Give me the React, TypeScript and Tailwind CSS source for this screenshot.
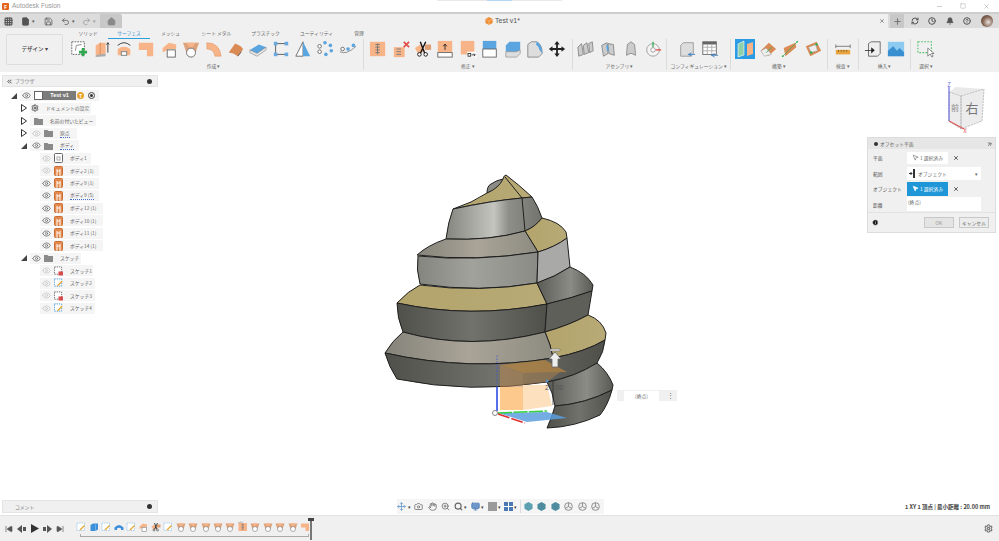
import { ReactNode } from "react"
import {
  Bell,
  Camera,
  ChevronsLeft,
  ChevronsRight,
  CircleHelp,
  Clock,
  Eye,
  File,
  Grid3x3,
  Hand,
  Home,
  Info,
  Minus,
  Monitor,
  MousePointer2,
  Move,
  Plus,
  Redo2,
  RefreshCw,
  Save,
  Search,
  Settings,
  SkipBack,
  SkipForward,
  Square,
  Undo2,
  X,
  ZoomIn,
} from "lucide-react"

const O = "#f7b488"
const D = "#d98a55"
const B = "#5aa5e0"

function Svg({ children, size = 20 }: { children: ReactNode; size?: number }) {
  return (
    <svg width={size} height={size} viewBox="0 0 20 20" className="shrink-0">
      {children}
    </svg>
  )
}

const icons: Record<string, ReactNode> = {
  sketch: (
    <>
      <rect x="2" y="2" width="14" height="14" fill="#fff" stroke="#666" strokeDasharray="2 1" />
      <path d="M6 12 L7 6 L13 5" fill="none" stroke="#888" />
      <path d="M14 12h3v3h3v3h-3v3h-3v-3h-3v-3h3z" fill="#2fa84f" transform="translate(-1 -3)" />
    </>
  ),
  tlsketch: (
    <>
      <rect x="2" y="2" width="15" height="15" fill="#fff" stroke="#4b9cdc" strokeDasharray="2 1.500" />
      <path d="M8 16 L17 7" stroke="#e8a72e" strokeWidth="2.500" />
    </>
  ),
  tlextrude: (
    <>
      <path d="M3 6 L8 3 H18 V15 L13 18 H3Z" fill="#3c8fd8" />
      <path d="M13 5V18" stroke="#9ccbf0" />
    </>
  ),
  tlrevolve: <path d="M1 11 Q10 1 19 11 V16 H14 V13 Q10 10 6 13 V16 H1Z" fill="#3c8fd8" />,
  extrude: (
    <>
      <path d="M3 6 L8 3 L14 3 L14 15 L8 17 L3 17Z" fill={O} />
      <path d="M8 3v14" stroke={D} />
      <path d="M3 17 L14 15 L14 18 L3 19Z" fill="#aaa" />
      <path d="M16.500 14V3M15 5l1.500-2 1.500 2" stroke="#333" fill="none" />
    </>
  ),
  revolve: (
    <>
      <path d="M3 10 Q10 5 17 10 L17 17 L13 17 L13 13 Q10 11 7 13 L7 17 L3 17Z" fill={O} />
      <path d="M3 6 Q10 0 17 6" fill="none" stroke="#333" />
      <rect x="7" y="13" width="6" height="4" fill="#fff" stroke="#777" />
    </>
  ),
  lshape: <path d="M2 3 H18 V18 H11 V11 H2Z" fill={O} />,
  loft: (
    <>
      <path d="M3 9 L10 3 L18 5 L18 10 L10 10 L3 14Z" fill={O} />
      <rect x="8" y="11" width="9" height="8" fill="#fff" stroke="#666" />
    </>
  ),
  patch: (
    <>
      <path d="M1 3 H19 L15 14 H5Z" fill={D} opacity="0.75" />
      <path d="M5 3 L10 11 L15 3Z" fill={O} />
      <circle cx="10" cy="14" r="5" fill="#fff" stroke="#666" />
    </>
  ),
  arc: <path d="M2 3 Q16 3 18 18 H11 Q10 10 2 10Z" fill={O} stroke={D} strokeWidth="0.500" />,
  thicken: (
    <>
      <path d="M2 14 L9 4 Q15 6 18 10 L12 18 Q7 14 2 14Z" fill={D} />
      <path d="M16 13 L12 18" stroke="#555" />
    </>
  ),
  offset: (
    <>
      <path d="M1 11 L11 5 L19 8 L9 15Z" fill={B} />
      <path d="M1 11 L9 15 L19 8 V11 L9 18 L1 14Z" fill="#e8e8e8" stroke="#777" strokeWidth="0.600" />
    </>
  ),
  boundary: (
    <>
      <path d="M4 4H16M4 16H16M4 4V16" stroke="#555" fill="none" />
      <rect x="2" y="2" width="4" height="4" fill="#6aa9e0" />
      <rect x="14" y="2" width="4" height="4" fill="#6aa9e0" />
      <rect x="2" y="14" width="4" height="4" fill="#6aa9e0" />
      <rect x="14" y="14" width="4" height="4" fill="#6aa9e0" />
    </>
  ),
  prism: (
    <>
      <path d="M10 2 L2 18 H10Z" fill="#fff" stroke="#666" />
      <path d="M10 2 L18 18 H10Z" fill={B} />
    </>
  ),
  dots: (
    <>
      <circle cx="10" cy="3" r="2" fill={B} />
      <circle cx="16" cy="6" r="2" fill={B} />
      <circle cx="17" cy="12" r="2" fill={B} />
      <circle cx="11" cy="16" r="2" fill={B} />
      <circle cx="4" cy="7" r="2" fill="#fff" stroke="#666" />
      <circle cx="4" cy="13" r="2" fill="#fff" stroke="#666" />
    </>
  ),
  spline: (
    <>
      <path d="M1 13 Q8 17 19 7" fill="none" stroke="#888" />
      <circle cx="4" cy="10" r="2" fill="#fff" stroke="#666" />
      <circle cx="10" cy="10" r="2" fill={B} />
      <circle cx="16" cy="6" r="2" fill={B} />
    </>
  ),
  stitch: (
    <>
      <rect x="1" y="2" width="17" height="16" fill={O} />
      <path d="M7 5h5M7 8h5M7 11h5M7 14h5M9.500 4v12" stroke="#777" fill="none" />
    </>
  ),
  unstitch: (
    <>
      <rect x="2" y="8" width="12" height="11" fill={O} />
      <path d="M5 10h5M5 13h5M5 16h5" stroke="#777" />
      <path d="M13 2l6 6M19 2l-6 6" stroke="#e0524a" strokeWidth="2" />
    </>
  ),
  trim: (
    <>
      <rect x="12" y="5" width="7" height="6" fill={D} opacity="0.8" />
      <path d="M1 9 L7 5 L12 12 L5 16Z" fill={O} />
      <path d="M7 2 L12 15M13 2 L7 15" stroke="#111" strokeWidth="1.500" />
      <circle cx="6" cy="16" r="2" fill="#fff" stroke="#111" />
      <circle cx="13" cy="16" r="2" fill="#fff" stroke="#111" />
    </>
  ),
  extend: (
    <>
      <rect x="2" y="1" width="16" height="13" fill={O} />
      <rect x="2" y="14" width="16" height="5" fill="#fff" stroke="#666" />
      <path d="M10 11V5M8 7l2-2.500 2 2.500" stroke="#222" fill="none" />
    </>
  ),
  press: (
    <>
      <rect x="2" y="1" width="15" height="15" fill={O} />
      <rect x="9" y="13" width="10" height="6" fill="#fff" />
      <rect x="10" y="15" width="3" height="3" fill="none" stroke="#333" />
      <path d="M14 16.500h4M16.500 15l1.500 1.500-1.500 1.500" stroke="#333" fill="none" />
    </>
  ),
  replace: (
    <>
      <rect x="2" y="1" width="15" height="9" fill={B} />
      <rect x="2" y="10" width="15" height="9" fill="#fff" stroke="#666" />
    </>
  ),
  split: (
    <>
      <path d="M2 6 L6 2 H18 V11 L14 13 H2Z" fill={B} />
      <path d="M2 13 H14 L18 11 V15 L14 19 H2Z" fill="#ddd" stroke="#777" strokeWidth="0.600" />
    </>
  ),
  round: (
    <>
      <path d="M2 5 L6 2 H12 Q18 5 18 15 L14 19 H2Z" fill="#ddd" stroke="#888" />
      <path d="M12 2 Q18 5 18 15 L15 11 Q14 7 11 5Z" fill={B} />
    </>
  ),
  move: <path d="M10 1 L13 5 H11 V9 H15 V7 L19 10 L15 13 V11 H11 V15 H13 L10 19 L7 15 H9 V11 H5 V13 L1 10 L5 7 V9 H9 V5 H7Z" fill="#222" />,
  joint1: <path d="M1 8 L5 4 L7 16 L2 18ZM7 6 L11 3 L13 14 L8 16ZM13 4 L17 2 L18 12 L14 14Z" fill="#ccc" stroke="#888" />,
  joint2: (
    <>
      <path d="M3 6 L9 3 L10 15 L5 18ZM10 4 L16 5 L17 17 L11 15Z" fill="#ccc" stroke="#888" />
      <path d="M9 6 L10 12" stroke={B} strokeWidth="2" />
    </>
  ),
  joint3: <path d="M6 5 L10 2 L14 5 L15 17 L11 15 L9 15 L5 17Z" fill="#ccc" stroke="#888" />,
  motion: (
    <>
      <circle cx="10" cy="11" r="7" fill="#f4f4f4" stroke="#999" />
      <circle cx="10" cy="11" r="2.500" fill="#fff" stroke="#999" />
      <path d="M10 2V8" stroke="#3cae5a" strokeWidth="1.500" />
      <path d="M13 11H19" stroke="#e0524a" strokeWidth="1.500" />
    </>
  ),
  config1: (
    <>
      <path d="M3 6 L6 3 H17 V15 L14 18 H3Z" fill="#ddd" stroke="#999" />
      <path d="M11 16h8M15 14l-3 2 3 2" stroke="#3c80c4" fill="none" />
    </>
  ),
  config2: (
    <>
      <rect x="2" y="2" width="15" height="14" fill="#fff" stroke="#666" />
      <rect x="2" y="2" width="15" height="3" fill="#666" />
      <path d="M2 8h15M2 12h15M7 5v11M12 5v11" stroke="#aaa" />
      <path d="M11 17h8M15 15l-3 2 3 2" stroke="#3c80c4" fill="none" />
    </>
  ),
  plane: (
    <>
      <rect x="0" y="0" width="20" height="20" fill="#2b9be3" />
      <path d="M3 5 L9 2 V16 L3 18Z" fill="#8ed1a8" stroke="#fff" strokeWidth="0.600" />
      <path d="M12 5 L18 3 V15 L12 17Z" fill={O} />
    </>
  ),
  diamond: (
    <>
      <path d="M2 12 L11 3 L19 10 L10 18Z" fill={D} />
      <path d="M2 12 L8 9 L14 16 L6 18Z" fill="#eee" stroke="#999" strokeWidth="0.600" />
      <path d="M8 14 L14 8" stroke="#3cae5a" />
    </>
  ),
  axis: (
    <>
      <path d="M3 9 L16 3 L17 8 L5 18Z" fill={D} />
      <path d="M1 19 L19 1" stroke="#3cae5a" strokeWidth="0.800" />
      <circle cx="2" cy="18" r="1" fill="#3cae5a" />
      <circle cx="18" cy="2" r="1" fill="#3cae5a" />
    </>
  ),
  point: (
    <>
      <path d="M2 7 L14 2 L19 12 L7 18Z" fill={D} />
      <path d="M5 8 L13 5 L15 12 L8 14Z" fill="#eee" stroke="#999" strokeWidth="0.600" />
      <circle cx="14" cy="5" r="1.500" fill="#3cae5a" />
      <circle cx="8" cy="14" r="1.500" fill="#3cae5a" />
    </>
  ),
  measure: (
    <>
      <path d="M2 5V9M18 5V9M2 7H18" stroke="#777" fill="none" />
      <rect x="2" y="11" width="16" height="5" fill="#e8a33d" />
      <path d="M5 11v2M8 11v2M11 11v2M14 11v2" stroke="#7a5a20" />
    </>
  ),
  insert: (
    <>
      <path d="M5 4 L8 2 H18 V15 L15 18 H5Z" fill="#eee" stroke="#666" />
      <path d="M1 11h7V8l4 3.500-4 3.500v-3H1z" fill="#222" />
    </>
  ),
  image: (
    <>
      <rect x="1" y="2" width="18" height="16" fill="#8ccbef" />
      <path d="M1 18 V12 L7 7 L11 12 L14 9 L19 14 V18Z" fill="#3a8fd0" />
    </>
  ),
  select: (
    <>
      <rect x="1" y="2" width="15" height="12" fill="none" stroke="#59c06f" strokeWidth="1.200" strokeDasharray="2 1.500" />
      <path d="M12 9 L12 18 L14.500 15.500 L16.500 19 L18 18 L16 15 L19 15Z" fill="#fff" stroke="#555" strokeWidth="0.700" />
    </>
  ),
}

type GroupProps = { label: string; items: string[]; className: string; last?: boolean }

function ToolGroup({ label, items, className, last }: GroupProps) {
  return (
    <div className={`flex flex-col items-center shrink-0 ${last ? "" : "border-r border-[#dcdcdc]"} ${className}`}>
      <div className="flex h-[20px] items-center">
        {items.map((n, i) => (
          <div key={i} className="flex w-[22.400px] justify-center">
            <Svg size={n === "plane" ? 20 : 18}>{icons[n]}</Svg>
          </div>
        ))}
      </div>
      <div className="mt-[1.500px] h-[9px] whitespace-nowrap text-[4.800px] leading-[9px] text-[#666]">{label} ▾</div>
    </div>
  )
}

const tabs: [string, string][] = [
  ["ソリッド", "w-[40px]"],
  ["サーフェス", "w-[42px]"],
  ["メッシュ", "w-[41px]"],
  ["シート メタル", "w-[51px]"],
  ["プラスチック", "w-[47px]"],
  ["ユーティリティ", "w-[55px]"],
  ["管理", "w-[30px]"],
]

function Toolbar() {
  return (
    <div className="flex h-[44px] shrink-0 bg-[#f0f0f0] pl-[6px]">
      <div className="mt-[6px] flex h-[31px] w-[57px] items-center justify-center rounded-[2px] border border-[#dedede] text-[5.500px] font-medium text-[#444]">
        デザイン ▾
      </div>
      <div className="ml-[5px] flex flex-col">
        <div className="flex h-[11px] items-end pt-[1px]">
          {tabs.map(([t, w], i) => (
            <div
              key={t}
              className={`h-[11px] ${w} text-center text-[4.800px] leading-[10px] ${
                i === 1 ? "border-b border-[#2ba0dc] text-[#2b8fcf]" : "text-[#666]"
              }`}
            >
              {t}
            </div>
          ))}
        </div>
        <div className="flex">
          <ToolGroup
            label="作成"
            className="pr-[4px]"
            items={["sketch", "extrude", "revolve", "lshape", "loft", "patch", "arc", "thicken", "offset", "boundary", "prism", "dots", "spline"]}
          />
          <ToolGroup
            label="修正"
            className="px-[3px]"
            items={["stitch", "unstitch", "trim", "extend", "press", "replace", "split", "round", "move"]}
          />
          <ToolGroup label="アセンブリ" className="px-[2px]" items={["joint1", "joint2", "joint3", "motion"]} />
          <ToolGroup label="コンフィギュレーション" className="w-[64px]" items={["config1", "config2"]} />
          <ToolGroup label="構築" className="px-[3px]" items={["plane", "diamond", "axis", "point"]} />
          <ToolGroup label="検査" className="px-[4px]" items={["measure"]} />
          <ToolGroup label="挿入" className="px-[3px]" items={["insert", "image"]} />
          <ToolGroup label="選択" className="pl-[4px]" items={["select"]} last />
        </div>
      </div>
    </div>
  )
}

type TreeRowProps = {
  label: string
  arrow?: "open" | "closed"
  eye?: boolean
  faint?: boolean
  icon: ReactNode
  indent: string
  chip: string
  dotted?: boolean
}

function Tri({ arrow }: { arrow?: "open" | "closed" }) {
  return (
    <div className="mr-[2px] flex w-[9px] shrink-0 justify-center">
      {arrow === "open" && <div className="h-0 w-0 border-b-[6px] border-l-[6px] border-b-[#444] border-l-transparent" />}
      {arrow === "closed" && (
        <svg width="6" height="8" viewBox="0 0 6 8">
          <path d="M.5.5 5.500 4 .5 7.500Z" fill="#fff" stroke="#333" />
        </svg>
      )}
    </div>
  )
}

const Folder = () => (
  <svg width="9" height="8" viewBox="0 0 9 8" className="ml-[2px] shrink-0">
    <path d="M0 1h3.500l1 1H9v6H0z" fill="#8a8a8a" />
  </svg>
)

const BodyIcon = () => (
  <svg width="9" height="10" viewBox="0 0 9 10" className="ml-[2px] shrink-0">
    <rect x=".5" y=".5" width="8" height="9" rx="1" fill="#e58a4e" stroke="#c86f35" />
    <path d="M3 3v7M6 3v7M3 5h3" stroke="#fff" strokeWidth="1" />
  </svg>
)

const EmptyBody = () => (
  <svg width="9" height="10" viewBox="0 0 9 10" className="ml-[2px] shrink-0">
    <rect x=".5" y=".5" width="8" height="9" rx="1" fill="#fff" stroke="#666" />
    <rect x="3" y="4" width="3" height="3" fill="none" stroke="#aaa" />
  </svg>
)

const SketchIcon = ({ lock }: { lock?: boolean }) => (
  <svg width="9" height="10" viewBox="0 0 10 10" className="ml-[2px] shrink-0">
    <rect x=".5" y=".5" width="8" height="8" fill="#fff" stroke={lock ? "#666" : "#4b9cdc"} strokeDasharray="1.500 1" />
    {lock ? <rect x="5" y="5.500" width="5" height="4.500" fill="#d94c4c" /> : <path d="M4 8 9 3" stroke="#e6a72e" strokeWidth="1.400" />}
  </svg>
)

function EyeIcon({ faint }: { faint?: boolean }) {
  return <Eye className={`h-[9px] w-[9px] shrink-0 ${faint ? "text-[#c4c4c4]" : "text-[#666]"}`} strokeWidth={2} />
}

function TreeRow({ label, arrow, eye, faint, icon, indent, chip, dotted }: TreeRowProps) {
  return (
    <div className={`flex h-[12.500px] items-center ${indent}`}>
      <Tri arrow={arrow} />
      <div className={`flex h-[11px] items-center bg-[#f5f5f5] ${chip}`}>
        {eye && (
          <div className="flex w-[12px] shrink-0 justify-center">
            <EyeIcon faint={faint} />
          </div>
        )}
        {icon}
        <span
          className={`ml-[7px] whitespace-nowrap text-[4.800px] leading-[8px] text-[#666] ${
            dotted ? "border-b border-dotted border-[#3c6fc4]" : ""
          }`}
        >
          {label}
        </span>
      </div>
    </div>
  )
}

function Browser() {
  const indent1 = "pl-[17px]"
  const indent2 = "pl-[27px]"
  const bodyChip = "w-[59px]"
  return (
    <div className="absolute left-[2px] top-[3px] w-[156px]">
      <div className="flex h-[12px] items-center border border-[#e4e4e4] bg-[#f0f0f0] pl-[3px] pr-[5px] text-[4.800px] text-[#777]">
        <ChevronsLeft className="h-[7px] w-[7px] text-[#444]" strokeWidth={3} />
        <span className="ml-[2px] flex-1">ブラウザ</span>
        <div className="h-[5px] w-[5px] rounded-full bg-[#333]" />
      </div>
      <div className="pt-[2.500px]">
        <div className="flex h-[12.500px] items-center pl-[7px]">
          <Tri arrow="open" />
          <div className="flex h-[11px] w-[79px] items-center bg-[#f5f5f5]">
            <div className="flex w-[12px] justify-center">
              <EyeIcon />
            </div>
            <div className="ml-[2px] h-[9px] w-[9px] border border-[#666] bg-white" />
            <div className="h-[9px] w-[33px] bg-[#7b7b7b] text-center font-['Liberation_Sans',sans-serif] text-[5.500px] font-bold leading-[9px] text-white">Test v1</div>
            <div className="ml-[1px] flex h-[7px] w-[7px] items-center justify-center rounded-full bg-[#e8a22c] text-[5px] font-bold text-white">T</div>
            <div className="ml-[4px] flex h-[7px] w-[7px] items-center justify-center rounded-full border border-[#444]">
              <div className="h-[3px] w-[3px] rounded-full bg-[#333]" />
            </div>
          </div>
        </div>
        <TreeRow label="ドキュメントの設定" arrow="closed" indent={indent1} chip="w-[61px] pl-[1px]" icon={<Settings className="h-[8px] w-[8px] text-[#555]" strokeWidth={3} />} />
        <TreeRow label="名前の付いたビュー" arrow="closed" indent={indent1} chip="w-[66px] pl-[2px]" icon={<Folder />} />
        <TreeRow label="原点" arrow="closed" eye faint indent={indent1} chip="w-[47px]" icon={<Folder />} dotted />
        <TreeRow label="ボディ" arrow="open" eye indent={indent1} chip="w-[49px]" icon={<Folder />} dotted />
        <TreeRow label="ボディ1" eye faint indent={indent2} chip="w-[51px]" icon={<EmptyBody />} />
        <TreeRow label="ボディ2 (1)" eye faint indent={indent2} chip={bodyChip} icon={<BodyIcon />} />
        <TreeRow label="ボディ9 (1)" eye indent={indent2} chip={bodyChip} icon={<BodyIcon />} />
        <TreeRow label="ボディ9 (5)" eye indent={indent2} chip={bodyChip} icon={<BodyIcon />} dotted />
        <TreeRow label="ボディ12 (1)" eye indent={indent2} chip="w-[63px]" icon={<BodyIcon />} />
        <TreeRow label="ボディ10 (1)" eye indent={indent2} chip="w-[63px]" icon={<BodyIcon />} />
        <TreeRow label="ボディ11 (1)" eye indent={indent2} chip="w-[63px]" icon={<BodyIcon />} />
        <TreeRow label="ボディ14 (1)" eye indent={indent2} chip="w-[63px]" icon={<BodyIcon />} />
        <TreeRow label="スケッチ" arrow="open" eye indent={indent1} chip="w-[51px]" icon={<Folder />} />
        <TreeRow label="スケッチ1" eye faint indent={indent2} chip="w-[53px]" icon={<SketchIcon lock />} />
        <TreeRow label="スケッチ2" eye faint indent={indent2} chip="w-[55px]" icon={<SketchIcon />} />
        <TreeRow label="スケッチ3" eye faint indent={indent2} chip="w-[55px]" icon={<SketchIcon lock />} />
        <TreeRow label="スケッチ4" eye faint indent={indent2} chip="w-[55px]" icon={<SketchIcon />} />
      </div>
    </div>
  )
}

function DialogRow({ label, children }: { label: string; children: ReactNode }) {
  return (
    <div className="flex h-[15.500px] items-center">
      <span className="w-[39px] whitespace-nowrap pl-[5px] text-[4.800px] text-[#555]">{label}</span>
      {children}
    </div>
  )
}

function OffsetDialog() {
  return (
    <div className="absolute left-[867px] top-[65px] w-[129px] border border-[#dcdcdc] bg-[#f0f0f0]">
      <div className="flex h-[11px] items-center bg-[#e6e6e6] pl-[6px] pr-[2px] text-[4.800px] text-[#666]">
        <div className="mr-[2px] h-[4px] w-[4px] rounded-full bg-[#333]" />
        <span className="flex-1">オフセット平面</span>
        <ChevronsRight className="h-[6px] w-[6px] text-[#333]" strokeWidth={3} />
      </div>
      <div className="pt-[1px]">
        <DialogRow label="平面">
          <div className="flex h-[12px] w-[41px] items-center justify-center whitespace-nowrap bg-white text-[4.800px] text-[#666]">
            <MousePointer2 className="mr-[1px] h-[7px] w-[7px]" />1 選択済み
          </div>
          <X className="ml-[5px] h-[6px] w-[6px] text-[#333]" strokeWidth={3} />
        </DialogRow>
        <DialogRow label="範囲">
          <div className="flex h-[13px] w-[74px] items-center bg-white pl-[2px] pr-[3px] text-[4.800px] text-[#666]">
            <svg width="8" height="9" viewBox="0 0 8 9" className="mr-[1px]">
              <path d="M0 4.500h3M1.500 3 3 4.500 1.500 6" stroke="#333" fill="none" />
              <path d="M5 0v9" stroke="#333" strokeWidth="2" />
            </svg>
            <span className="flex-1">オブジェクト</span>▾
          </div>
        </DialogRow>
        <DialogRow label="オブジェクト">
          <div className="flex h-[14px] w-[41px] items-center justify-center whitespace-nowrap bg-[#1f96d8] text-[4.800px] text-white">
            <MousePointer2 className="mr-[1px] h-[7px] w-[7px]" fill="#fff" />1 選択済み
          </div>
          <X className="ml-[5px] h-[6px] w-[6px] text-[#333]" strokeWidth={3} />
        </DialogRow>
        <DialogRow label="距離">
          <div className="h-[14px] w-[74px] bg-white pl-[1px] text-[4.800px] leading-[10px] text-[#666]">(終点)</div>
        </DialogRow>
      </div>
      <div className="flex h-[20px] items-center border-t border-[#e2e2e2] pl-[4px] pr-[6px]">
        <Info className="h-[7px] w-[7px] text-white" fill="#111" />
        <div className="ml-[45px] flex h-[11px] w-[31px] items-center justify-center border border-[#c8c8c8] bg-[#e4e4e4] text-[5px] text-[#999]">OK</div>
        <div className="ml-[5px] flex h-[11px] w-[31px] items-center justify-center whitespace-nowrap border border-[#c8c8c8] bg-[#ececec] text-[4.800px] text-[#666]">キャンセル</div>
      </div>
    </div>
  )
}

function ViewCube() {
  return (
    <svg className="absolute left-[936px] top-[9px]" width="56" height="56" viewBox="0 0 56 56">
      <path d="M13 11 L20 6 L48 8 L46 40 L25 48 L13 40Z" fill="#e9e9e9" />
      <path d="M13 11 L25 15 L25 48 L13 40ZM25 15 L48 8 L46 40 L25 48Z" fill="#ececec" stroke="#aaa" strokeDasharray="2 1" strokeWidth="0.700" />
      <path d="M13 40V6" stroke="#6d6de0" strokeWidth="1.200" />
      <path d="M13 40 L28 48" stroke="#e05a5a" strokeWidth="1.200" />
      <text x="13" y="6" textAnchor="middle" fontSize="6" fill="#6d6de0">Z</text>
      <text x="29" y="52" textAnchor="middle" fontSize="6" fill="#e05a5a">X</text>
      <text x="36" y="32" textAnchor="middle" fontSize="13" fill="#777" fontFamily="Noto Sans CJK JP">右</text>
      <text x="19" y="30" textAnchor="middle" fontSize="8" fill="#888" fontFamily="Noto Sans CJK JP">前</text>
    </svg>
  )
}

function Model() {
  return (
    <svg className="absolute left-0 top-0" width="999" height="443" viewBox="0 72 999 443" fill="none">
      <defs>
        <linearGradient id="tan" x1="0" x2="1" y1="0" y2="0">
          <stop offset="0" stopColor="#b3a46c" />
          <stop offset="1" stopColor="#b8aa76" />
        </linearGradient>
        <linearGradient id="light" x1="0" x2="1" y1="0" y2="0">
          <stop offset="0" stopColor="#85857f" />
          <stop offset="0.450" stopColor="#a2a29c" />
          <stop offset="1" stopColor="#8b8b85" />
        </linearGradient>
        <linearGradient id="shine" x1="0" x2="1" y1="0" y2="0">
          <stop offset="0" stopColor="#85857f" />
          <stop offset="0.500" stopColor="#c5c5c0" />
          <stop offset="0.650" stopColor="#8f8f89" />
          <stop offset="1" stopColor="#73736d" />
        </linearGradient>
        <linearGradient id="warm" x1="0" x2="1" y1="0" y2="0">
          <stop offset="0" stopColor="#85837a" />
          <stop offset="0.500" stopColor="#aaa498" />
          <stop offset="1" stopColor="#8d8b80" />
        </linearGradient>
        <linearGradient id="dark" x1="0" x2="1" y1="0" y2="0">
          <stop offset="0" stopColor="#50504b" />
          <stop offset="0.500" stopColor="#72726c" />
          <stop offset="1" stopColor="#50504b" />
        </linearGradient>
        <linearGradient id="side" x1="0" x2="1" y1="0" y2="0">
          <stop offset="0" stopColor="#5b5b56" />
          <stop offset="0.600" stopColor="#8c8c86" />
          <stop offset="1" stopColor="#5a5a55" />
        </linearGradient>
      </defs>
      <g stroke="#1f1f1f" strokeWidth="1" strokeLinejoin="round">
        <path d="M487 193 Q487 186 491 184 Q497 180 503 179 L506 179 L505 186Z" fill="#8c8b85" />
        <path d="M453 209 Q472 203 487 193 Q499 188 503 179 Q504 175 506 175 Q518 184 532 197 L522 198 Q490 201 453 209Z" fill="url(#tan)" />
        <path d="M505 177 L522 198" />
        <path d="M453 209 Q490 201 522 198 L532 197 Q538 206 542 218 Q535 227 525 231 Q490 241 446 239 Q448 222 453 209Z" fill="url(#shine)" />
        <path d="M522 198 L525 231" />
        <path d="M542 218 Q560 222 566 232 L567 238 Q555 247 538 252 L525 231 Q535 227 542 218Z" fill="url(#tan)" />
        <path d="M446 239 Q428 245 417 255 Q475 262 538 252 L525 231 Q490 241 446 239Z" fill="url(#warm)" />
        <path d="M418 256 Q475 262 538 252 L537 283 Q480 293 420 284 Q416 270 418 256Z" fill="url(#light)" />
        <path d="M538 252 Q555 247 567 238 L570 267 Q555 277 537 283Z" fill="#a9aaa7" />
        <path d="M420 285 Q480 293 537 283 L547 304 Q470 319 397 303 Q408 291 420 285Z" fill="url(#tan)" />
        <path d="M537 283 Q555 277 570 267 Q586 273 593 285 L592 291 Q572 298 547 304Z" fill="url(#side)" />
        <path d="M397 303 Q470 319 547 304 L545 332 Q470 351 403 332 Q397 318 397 303Z" fill="url(#dark)" />
        <path d="M547 304 Q572 298 592 291 L588 315 Q570 325 545 332Z" fill="#5f5f5a" />
        <path d="M545 332 Q570 325 588 315 Q602 320 606 333 L605 340 Q585 352 553 358 Q551 345 545 332Z" fill="url(#tan)" />
        <path d="M403 332 Q470 351 545 332 Q551 345 553 358 Q470 372 385 353 Q392 341 403 332Z" fill="url(#warm)" />
        <path d="M385 353 Q470 372 553 358 Q585 352 605 340 Q604 352 597 363 Q575 377 547 382 Q470 394 397 379 Q389 367 385 353Z" fill="url(#dark)" />
      </g>
      {/* offset plane preview */}
      <path d="M500 387 H523 V410 H500Z" fill="#fdc98c" />
      <path d="M523 385 H547 L552 406 L523 410Z" fill="#fde0bd" />
      <path d="M500 365 L523 373 V387 H500Z" fill="#b98a52" opacity="0.55" />
      <path d="M500 365 L545 360 L567 372 L523 373Z" fill="#c98d3a" opacity="0.6" />
      <path d="M523 373 L560 372 L547 382 L523 385Z" fill="#a77f50" opacity="0.55" />
      <g stroke="#1f1f1f" strokeWidth="1" strokeLinejoin="round">
        <path d="M597 363 Q608 372 613 385 L612 390 Q585 404 555 406 L552 393 L547 382 Q575 377 597 363Z" fill="url(#side)" />
        <path d="M555 406 Q585 404 612 390 Q608 405 600 415 Q575 427 547 428 Q552 417 555 406Z" fill="url(#dark)" />
      </g>
      <path d="M498 413 L547 412 L567 418 L527 422Z" fill="#5a9fde" opacity="0.85" />
      <path d="M497 411 V387" stroke="#1f3fe0" strokeWidth="1.500" />
      <path d="M497 387 V355" stroke="#3a55d8" strokeWidth="0.800" strokeDasharray="1.500 1.500" />
      <path d="M498 413 L547 411" stroke="#35d13a" strokeWidth="1.500" strokeDasharray="14 1.500" />
      <path d="M498 414 L525 423" stroke="#e22d2d" strokeWidth="1.500" strokeDasharray="12 2" />
      <circle cx="495" cy="413" r="2.500" fill="#fff" stroke="#888" />
      <path d="M553 380 V405" stroke="#222" strokeWidth="0.700" />
      <circle cx="547" cy="381" r="1.500" fill="#5a8fc0" />
      <text x="545" y="390" fontSize="7.500" fill="#555" fontFamily="Liberation Sans">20.00</text>
      <path d="M550 349 H560 V351 H550Z" fill="#ddd" stroke="#666" strokeWidth="0.500" />
      <path d="M555 352 L561 359 H558 V367 H552 V359 H549Z" fill="#eee" stroke="#666" strokeWidth="0.800" />
    </svg>
  )
}

const Caret = ({ className }: { className: string }) => <span className={`text-[5px] leading-none text-[#444] ${className}`}>▾</span>

function NavBar() {
  const cls = "h-[9px] w-[9px] shrink-0 text-[#666]"
  const Cube = ({ c }: { c: string }) => (
    <svg width="9" height="9" viewBox="0 0 10 10">
      <path d="M5 0 9.500 2.500V7.500L5 10 .5 7.500V2.500Z" fill={c} />
    </svg>
  )
  const Ring = () => (
    <svg width="9" height="9" viewBox="0 0 10 10">
      <circle cx="5" cy="5" r="4.300" fill="#eee" stroke="#888" />
      <path d="M5 5V1M5 5 1.500 7M5 5 8.500 7" stroke="#888" />
    </svg>
  )
  return (
    <div className="absolute bottom-[1px] left-[397px] flex h-[15px] w-[207px] items-center bg-[#f5f5f5]">
      <Move className="h-[9px] w-[9px] shrink-0 text-[#5b8fc0]" />
      <Caret className="w-[8px] pl-[2px]" />
      <Camera className={cls} />
      <Hand className={`ml-[5px] ${cls}`} />
      <ZoomIn className={`ml-[4px] ${cls}`} />
      <Search className="ml-[4px] h-[9px] w-[9px] shrink-0 text-[#666]" strokeWidth={3} />
      <Caret className="w-[4px] pl-[1px]" />
      <Monitor className="ml-[4px] h-[9px] w-[9px] shrink-0 text-[#4a78b5]" fill="#6d98c8" />
      <Caret className="w-[4px] pl-[1px]" />
      <div className="ml-[4px] h-[9px] w-[9px] shrink-0 bg-[#9a9a9a]" />
      <Caret className="w-[4px] pl-[1px]" />
      <div className="ml-[3px] grid h-[9px] w-[9px] shrink-0 grid-cols-2 gap-px bg-white">
        <div className="bg-[#4a78b5]" />
        <div className="bg-[#4a78b5]" />
        <div className="bg-[#4a78b5]" />
        <div className="bg-[#4a78b5]" />
      </div>
      <Caret className="w-[4px] pl-[1px]" />
      <div className="mx-[3px] h-[13px] w-px bg-[#ddd]" />
      <div className="flex items-center gap-[4.400px]">
        <Cube c="#5e9fb2" />
        <Cube c="#4d8c9e" />
        <Cube c="#4d8c9e" />
        <Ring />
        <Ring />
        <Ring />
      </div>
    </div>
  )
}

function Timeline() {
  const items = [
    "tlsketch", "tlextrude", "tlsketch", "tlrevolve", "tlsketch", "loft", "trim", "tlsketch",
    "patch", "patch", "patch", "patch", "patch", "stitch", "patch", "patch", "patch", "patch", "lshape",
  ]
  return (
    <div className="flex h-[26px] shrink-0 items-center border-t border-[#e2e2e2] bg-[#f0f0f0]">
      <div className="flex w-[75px] shrink-0 items-center gap-[4px] pl-[5px] text-[#555]">
        <SkipBack className="h-[8px] w-[8px]" fill="#555" />
        <svg width="9" height="8" viewBox="0 0 9 8"><path d="M5 0 0 4 5 8ZM6 2h3v4H6Z" fill="#555" /></svg>
        <svg width="9" height="9" viewBox="0 0 9 9"><path d="M1 0 9 4.500 1 9Z" fill="#333" /></svg>
        <svg width="9" height="8" viewBox="0 0 9 8"><path d="M4 0 9 4 4 8ZM0 2h3v4H0Z" fill="#555" /></svg>
        <SkipForward className="h-[8px] w-[8px]" fill="#555" />
      </div>
      <div className="relative h-full w-[240px]">
        <div className="flex pt-[6px]">
          {items.map((k, i) => (
            <div key={i} className="flex w-[12.450px] justify-center">
              <Svg size={10}>{icons[k]}</Svg>
            </div>
          ))}
        </div>
        <div className="absolute left-[5px] right-[6px] top-[18px] h-[3px] border-x border-b border-[#aaa]" />
        <div className="absolute left-[163px] top-[3px] text-[5px] leading-[5px] text-[#333]">〰</div>
        <div className="absolute left-[235px] top-[2px] h-[22px] w-[2px] bg-[#777]" />
        <div className="absolute left-[233px] top-[2px] h-[3px] w-[6px] bg-[#444]" />
      </div>
      <div className="flex-1" />
      <Settings className="mr-[6px] h-[9px] w-[9px] text-[#777]" strokeWidth={3} />
    </div>
  )
}

export default function App() {
  return (
    <div className="flex h-[541px] w-[999px] flex-col overflow-hidden bg-white font-['Noto_Sans_CJK_JP','Noto_Sans',sans-serif]">
      {/* Title bar */}
      <div className="relative flex h-[12px] shrink-0 items-center pl-[2px] pr-[9px]">
        <div className="flex h-[7px] w-[7px] items-center justify-center rounded-[1px] bg-[#e5641e] text-[5px] font-bold leading-none text-white">F</div>
        <span className="ml-[3px] font-['Liberation_Sans',sans-serif] text-[6.500px] text-[#999]">Autodesk Fusion</span>
        <div className="absolute left-[437px] top-0 flex h-[1px]">
          <div className="w-[50px] bg-[#e9e9e9]" />
          <div className="w-[25px] bg-[#b5d6f2]" />
          <div className="w-[50px] bg-[#e9e9e9]" />
        </div>
        <div className="flex-1" />
        <Minus className="h-[7px] w-[7px] text-[#aaa]" />
        <Square className="ml-[17px] h-[6px] w-[6px] text-[#aaa]" />
        <X className="ml-[17px] h-[7px] w-[7px] text-[#aaa]" />
      </div>

      {/* Tab bar */}
      <div className="flex h-[16px] shrink-0 border-t-[2px] border-[#cecece] bg-[#f0f0f0]">
        <div className="flex w-[100px] items-center bg-[#dcdcdc] pl-[4px] text-[#555]">
          <Grid3x3 className="h-[9px] w-[9px]" strokeWidth={3} />
          <File className="ml-[8px] h-[9px] w-[9px]" fill="#555" />
          <span className="ml-[2px] text-[5px]">▾</span>
          <Save className="ml-[9px] h-[9px] w-[9px]" />
          <Undo2 className="ml-[8px] h-[9px] w-[9px]" />
          <span className="ml-[2px] text-[5px]">▾</span>
          <Redo2 className="ml-[7px] h-[9px] w-[9px] text-[#999]" />
          <span className="ml-[2px] text-[5px] text-[#999]">▾</span>
        </div>
        <div className="flex w-[22px] items-center justify-center rounded-tr-[2px] bg-[#c8c8c8]">
          <Home className="h-[9px] w-[9px] text-[#888]" fill="#888" />
        </div>
        <div className="flex flex-1 items-center justify-center pl-[4px] text-[7px] text-[#555]">
          <svg width="8" height="8" viewBox="0 0 10 10" className="mr-[2px]">
            <path d="M5 0 9.500 2.500V7.500L5 10 .5 7.500V2.500Z" fill="#ef8e36" />
            <path d="M.5 2.500 5 5 9.500 2.500M5 5V10" stroke="#fbd3a8" strokeWidth="0.600" fill="none" />
          </svg>
          <span className="font-['Liberation_Sans',sans-serif]">Test v1*</span>
        </div>
        <X className="mr-[3px] h-[6px] w-[6px] self-center text-[#777]" strokeWidth={3} />
        <div className="flex h-full w-[111px] shrink-0 items-center bg-[#dcdcdc] pl-[2px]">
          <div className="flex h-full w-[14px] items-center justify-center bg-[#c8c8c8]">
            <Plus className="h-[9px] w-[9px] text-[#777]" strokeWidth={3} />
          </div>
          <RefreshCw className="ml-[7px] h-[8px] w-[8px] text-[#555]" strokeWidth={3} />
          <Clock className="ml-[9px] h-[8px] w-[8px] text-[#555]" strokeWidth={3} />
          <Bell className="ml-[10px] h-[8px] w-[8px] text-[#555]" fill="#555" />
          <CircleHelp className="ml-[9px] h-[8px] w-[8px] text-[#555]" strokeWidth={3} />
          <div className="ml-[10px] h-[12px] w-[12px] rounded-full bg-[radial-gradient(circle_at_60%_60%,#e9e4e0_0%,#8a6a58_50%,#3a2a24_100%)]" />
        </div>
      </div>

      <Toolbar />

      {/* Canvas */}
      <div className="relative flex-1 bg-white">
        <Model />
        <Browser />
        <ViewCube />
        <OffsetDialog />
        <div className="absolute left-[617px] top-[318px] flex h-[11px] w-[60px] items-center bg-[#f0f0f0] pl-[7px] pr-[3px]">
          <div className="flex h-[10px] w-[35px] items-center justify-center bg-white text-[4.800px] text-[#666]">(終点)</div>
          <div className="flex-1" />
          <span className="text-[7px] leading-none text-[#666]">⋮</span>
        </div>
        <div className="absolute bottom-[2px] left-[2px] flex h-[13px] w-[156px] items-center border border-[#e4e4e4] bg-[#f0f0f0] pl-[12px] pr-[5px] text-[4.800px] text-[#777]">
          <span className="flex-1">コメント</span>
          <div className="h-[5px] w-[5px] rounded-full bg-[#333]" />
        </div>
        <NavBar />
        <div className="absolute bottom-[4px] right-[9px] text-[5.500px] font-bold text-[#444]">1 XY 1 頂点 | 最小距離 : 20.00 mm</div>
      </div>

      <Timeline />
    </div>
  )
}
